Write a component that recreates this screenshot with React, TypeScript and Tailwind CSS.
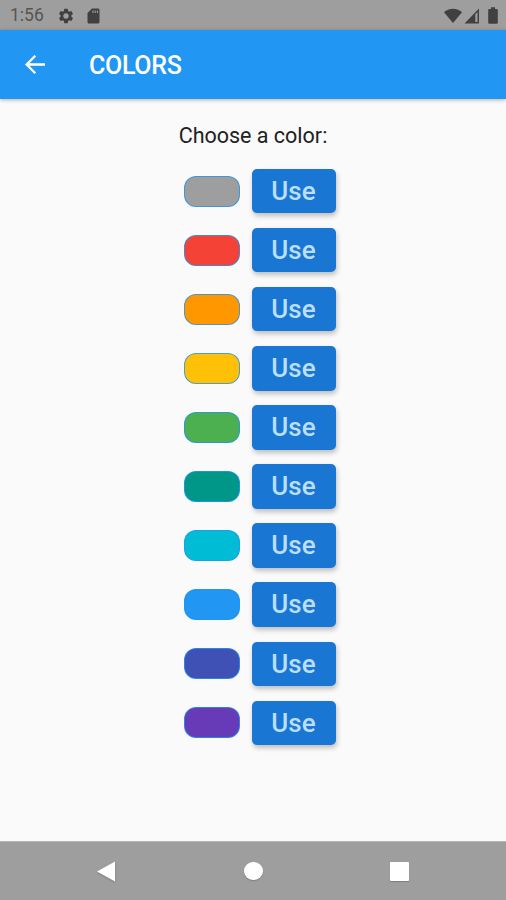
import { useState } from "react"

const colors = [
    { name: "grey", swatch: "bg-[#9e9e9e]" },
    { name: "red", swatch: "bg-[#f44336]" },
    { name: "orange", swatch: "bg-[#ff9800]" },
    { name: "amber", swatch: "bg-[#ffc107]" },
    { name: "green", swatch: "bg-[#4caf50]" },
    { name: "teal", swatch: "bg-[#009688]" },
    { name: "cyan", swatch: "bg-[#00bcd4]" },
    { name: "blue", swatch: "bg-[#2196f3]" },
    { name: "indigo", swatch: "bg-[#3f51b5]" },
    { name: "purple", swatch: "bg-[#673ab7]" },
]

function StatusBar() {
    return (
        <div className="flex h-[30px] shrink-0 items-center bg-[#9e9e9e] pt-[1px] pl-[10px] pr-[8px] text-[#404040]">
            <span className="w-[46px] pt-[1px] text-[17.5px] leading-none text-[#555555]">1:56</span>
            <svg className="ml-[1px] h-[18px] w-[18px]" viewBox="0 0 24 24" fill="currentColor">
                <path d="M19.14 12.94c.04-.3.06-.61.06-.94s-.02-.64-.07-.94l2.03-1.58a.49.49 0 0 0 .12-.61l-1.92-3.32a.49.49 0 0 0-.59-.22l-2.39.96a7 7 0 0 0-1.62-.94l-.36-2.54a.48.48 0 0 0-.48-.41h-3.84a.48.48 0 0 0-.47.41l-.36 2.54c-.59.24-1.13.57-1.62.94l-2.39-.96a.48.48 0 0 0-.59.22L2.74 8.87a.48.48 0 0 0 .12.61l2.03 1.58c-.05.3-.09.63-.09.94s.02.64.07.94l-2.03 1.58a.49.49 0 0 0-.12.61l1.92 3.32c.12.22.37.29.59.22l2.39-.96c.5.38 1.03.7 1.62.94l.36 2.54c.05.24.24.41.48.41h3.84c.24 0 .44-.17.47-.41l.36-2.54a7 7 0 0 0 1.62-.94l2.39.96c.22.08.47 0 .59-.22l1.92-3.32a.48.48 0 0 0-.12-.61zM12 15.6a3.6 3.6 0 1 1 0-7.2 3.6 3.6 0 0 1 0 7.2z" />
            </svg>
            <svg className="ml-[9px] h-[18px] w-[19px]" viewBox="0 0 24 24" fill="currentColor">
                <path d="M18 2h-8L4.02 8 4 20c0 1.1.9 2 2 2h12c1.1 0 2-.9 2-2V4c0-1.1-.9-2-2-2zm-6 6h-1.500V4.800H12zm3 0h-1.500V4.800H15zm3 0h-1.500V4.800H18z" />
            </svg>
            <svg className="ml-auto h-[16px] w-[18px]" viewBox="0 0 18 16" fill="currentColor">
                <path d="M9 15 0 4.2C2.4 2 5.5.8 9 .8s6.600 1.200 9 3.400z" />
            </svg>
            <svg className="ml-[2px] h-[16px] w-[16px]" viewBox="0 0 16 16" fill="currentColor">
                <path d="M.5 15.500 15 .5v15zM11.300 6.200v7.800h2.200V4z" fillRule="evenodd" />
            </svg>
            <svg className="ml-[8px] h-[17px] w-[10px]" viewBox="0 0 10 17" fill="currentColor">
                <path d="M8.700 2H7V.3H3V2H1.300Q.2 2 .2 3.200v12.300q0 1.200 1.100 1.200h7.400q1.100 0 1.100-1.200V3.200Q9.800 2 8.700 2z" />
            </svg>
        </div>
    )
}

function ColorRow({ color, onUse }) {
    return (
        <div className="flex items-center gap-[12px]">
            <div className={`h-[31px] w-[56px] rounded-[12px] border border-[#2196f3]/80 ${color.swatch}`} />
            <button
                className="h-[44.5px] w-[84px] rounded-[5px] bg-[#1976d2] pb-[0.5px] text-[26px] leading-none font-medium text-[#bbdefb] shadow-[1px_3px_5px_rgba(0,0,0,0.24)]"
                onClick={() => onUse(color.name)}
            >
                Use
            </button>
        </div>
    )
}

function App() {
    const [, setSelected] = useState("blue")

    return (
        <div className="flex h-[900px] w-[506px] flex-col overflow-hidden bg-[#fafafa] font-['Roboto',sans-serif]">
            <StatusBar />
            <header className="z-10 flex h-[69px] shrink-0 items-center bg-[#2196f3] pl-[23px] text-white shadow-[0_1px_4px_rgba(0,0,0,0.3)]">
                <svg className="h-[24px] w-[24px]" viewBox="0 0 24 24" fill="none" stroke="currentColor" strokeWidth="2.300">
                    <path d="M22 11.500H4M12.300 2.800 3.600 11.500l8.700 8.700" />
                </svg>
                <h1 className="ml-[42px] pt-[2px] text-[25px] leading-none font-medium tracking-[-0.3px]">COLORS</h1>
            </header>

            <main className="flex flex-1 flex-col items-center pt-[24px]">
                <p className="text-[21.5px] leading-[26px] text-[#212121]">Choose a color:</p>
                {/* one row per theme color */}
                <div className="mt-[19.8px] ml-[13px] flex flex-col gap-[14.6px]">
                    {colors.map((color) => (
                        <ColorRow key={color.name} color={color} onUse={setSelected} />
                    ))}
                </div>
            </main>

            <nav className="flex h-[59px] shrink-0 items-center justify-between border-t border-[#b5b5b5] bg-[#9e9e9e] pl-[97px] pr-[97px] text-white">
                <svg className="h-[21px] w-[20px] drop-shadow-[0_1px_1px_rgba(0,0,0,0.2)]" viewBox="0 0 20 21" fill="currentColor">
                    <path d="M18 .5v20L0 10.500z" />
                </svg>
                <div className="h-[18.500px] w-[18.500px] rounded-full bg-white shadow-[0_1px_1px_rgba(0,0,0,0.2)]" />
                <div className="h-[19px] w-[19px] rounded-[1px] bg-white shadow-[0_1px_1px_rgba(0,0,0,0.2)]" />
            </nav>
        </div>
    )
}

export default App
